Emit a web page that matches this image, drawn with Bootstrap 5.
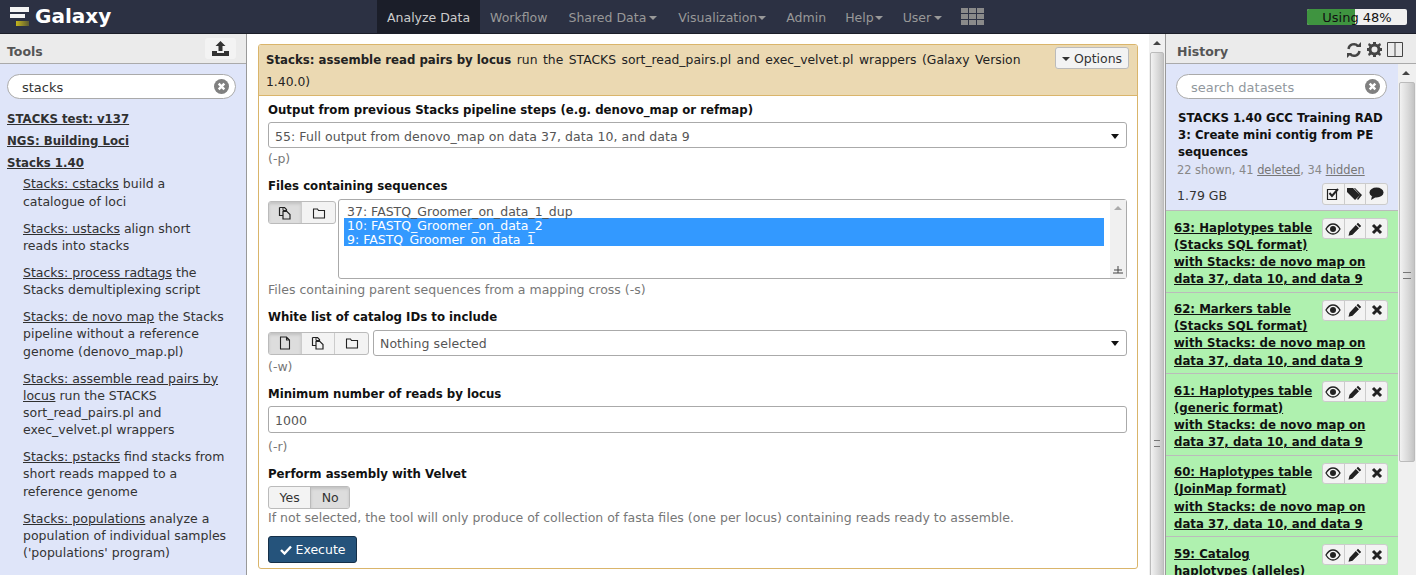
<!DOCTYPE html>
<html lang="en">

<head>
    <meta charset="UTF-8">
    <title>Galaxy</title>
    <link href="https://cdn.jsdelivr.net/npm/bootstrap@5.3.0/dist/css/bootstrap.min.css" rel="stylesheet">
    <style>
        html, body { height: 100%; overflow: hidden; }
        body { font-family: "DejaVu Sans", Verdana, sans-serif; font-size: 12.5px; line-height: 17.14px; color: #333; background: #fff; }
        a { color: #303030; }
        b { font-size: 11.75px; word-spacing: 0; }
        .masthead { height: 34px; background: #2c3143; border-bottom: 1px solid #1b1e29; color: #ccc; }
        .brand { font-size: 20px; font-weight: 700; color: #fff; width: 377px; padding-left: 9px; gap: 6px; }
        .mast-link { padding: 0 10px; line-height: 35px; color: #999; text-decoration: none; font-size: 12.5px; }
        .mast-link.on { background: #1b1e29; color: #ccc; }
        .mast-link.wide { padding-right: 11px; }
        .mast-link.slim { padding-right: 9px; }
        .caret-mini { display: inline-block; border: 4px solid transparent; border-top-color: currentColor; border-bottom: 0; vertical-align: 2px; margin-left: 3px; }
        .mast-link.tight .caret-mini { margin-left: 1px; }
        .grid-ico { margin-left: 9px; }
        .quota { width: 100px; height: 16px; background: #f0f0f0; border-radius: 2px; margin: 0 9px 0 auto; overflow: hidden; position: relative; color: #111; text-align: center; line-height: 17px; font-size: 13px; }
        .quota-fill { position: absolute; left: 0; top: 0; bottom: 0; background: #3f9440; }
        .quota-text { position: relative; }
        .work { height: 541px; overflow: hidden; }
        .side-left { width: 247px; border-right: 1px solid #999; background: #dfe5f9; }
        .side-right { width: 251px; border-left: 1px solid #999; position: relative; background: #dfe5f9; }
        .side-head { height: 30px; background: #ebebeb; border-bottom: 1px solid #aaa; font-weight: 700; color: #555; padding: 0 7px; font-size: 12.5px; }
        .head-title { padding-top: 6px; }
        .head-icons { padding: 2px 6px 0 0; gap: 5px; }
        .up-btn { width: 31px; height: 21px; background: #f3f3f3; border-radius: 3px; margin-right: 3px; }
        .search-pill { margin: 10px 10px 0 7px; height: 25px; border: 1px solid #aaa; border-radius: 13px; background: #fff; padding: 2px 6px 0 14px; font-size: 13px; }
        .search-pill .clear-x { margin-top: -2px; }
        .hist-top .search-pill { margin: 0 11px 0 0; }
        .clear-x { width: 15px; height: 15px; margin-left: auto; }
        .tool-list { padding-top: 12px; }
        .sec-link { display: block; font-weight: 700; font-size: 11.75px; margin: 0 7px 5px; }
        .sec-link.last { margin-bottom: 3px; }
        .tool-row { margin: 0 19px 10px 23px; }
        .mid { position: relative; padding: 10px 11px 0 11px; min-width: 0; }
        .form-box { border: 1px solid #dab56b; border-radius: 3px; height: 525px; overflow: hidden; }
        .form-top { background: #ebd9b2; border-bottom: 1px solid #dab56b; height: 51px; padding: 4px 8px 0 7px; color: #222; }
        .form-top-text { flex: 1; line-height: 22px; font-size: 12.35px; word-spacing: 1.6px; }
        .opt-btn { width: 74px; height: 22px; background: #f3f3f3; border: 1px solid #bbb; border-radius: 3px; color: #333; margin-top: -2px; padding-top: 1px; white-space: nowrap; }
        .form-inner { padding: 6px 10px 0 9px; }
        .fld-label { font-weight: 700; font-size: 11.75px; color: #111; margin-bottom: 4px; }
        .fld-label.snug { margin-bottom: 3px; }
        .fld-note { color: #777; margin-top: 2px; }
        .fld-note.far { margin-top: 5px; }
        .fld-note.flush { margin-top: 0; }
        .fld { margin-bottom: 11px; }
        .fld.short-gap { margin-bottom: 10px; }
        .sel-box { border: 1px solid #aaa; border-radius: 3px; height: 26px; padding: 2px 7px 0 6px; color: #555; background: #fff; letter-spacing: .06px; }
        .sel-box.tall { height: 27px; }
        .sel-caret { margin-left: auto; border: 4px solid transparent; border-top: 5px solid #111; border-bottom: 0; }
        .ico-group { display: inline-flex; border: 1px solid #bbb; border-radius: 3px; background: #f3f3f3; height: 23px; overflow: hidden; margin-top: 2px; }
        .ico-cell { width: 33px; display: flex; align-items: center; justify-content: center; border-right: 1px solid #ccc; }
        .ico-cell:last-child { border-right: 0; }
        .ico-cell.on { background: #ddd; box-shadow: inset 0 2px 3px rgba(0,0,0,.12); }
        .multi-box { flex: 1; height: 80px; border: 1px solid #aaa; border-radius: 3px; margin-left: 2px; padding: 4px 0 0 5px; color: #555; position: relative; }
        .multi-row { padding-left: 3px; margin-right: 22px; height: 14px; line-height: 16px; }
        .multi-row.hit { background: #3399ff; color: #fff; }
        .multi-bar { position: absolute; right: 0; top: 0; bottom: 0; width: 16px; background: #f0f0f0; }
        .multi-up { position: absolute; left: 4px; top: 6px; border: 4px solid transparent; border-bottom-color: #aaa; border-top: 0; }
        .multi-grip { position: absolute; right: 3px; bottom: 3px; }
        .yn { display: inline-flex; border: 1px solid #bbb; border-radius: 3px; height: 23px; overflow: hidden; background: #f3f3f3; color: #333; }
        .yn span { padding: 0 10.5px; line-height: 21px; }
        .yn .on { background: #ddd; border-left: 1px solid #bbb; box-shadow: inset 0 2px 3px rgba(0,0,0,.12); }
        .run-btn { width: 89px; height: 27px; background: #25537b; border: 1px solid #152f48; border-radius: 3px; color: #fff; margin-top: 10px; }
        .vbar { width: 16px; background: #f0f0f0; position: relative; flex: none; overflow: hidden; }
        .vbar-thumb { position: absolute; left: 1px; right: 1px; background: linear-gradient(90deg, #f2f2f2, #d8d8d8 60%, #c4c4c4); border: 1px solid #bbb; border-radius: 2px; }
        .vbar-arrow { position: absolute; left: 4px; top: 7px; border: 4px solid transparent; border-bottom-color: #444; border-top: 0; }
        .grip { position: absolute; left: 3px; right: 3px; top: 50%; height: 7px; border-top: 1px solid #777; border-bottom: 1px solid #777; }
        .hist-scroll { position: absolute; right: 0; top: 30px; bottom: 0; width: 18px; }
        .hist-body { width: 232px; }
        .hist-top { padding: 10px 0 0 10px; height: 147px; border-bottom: 1px solid #bbb; }
        .hist-name { font-weight: 700; font-size: 11.75px; color: #111; margin: 11px 6px 0 2px; }
        .hist-stat { color: #888; font-size: 11.4px; margin: 1px 0 0 1px; }
        .hist-stat a { color: #777; }
        .hist-size { color: #333; padding-left: 1px; }
        .hist-foot { margin-top: 7px; }
        .mini-grp { display: inline-flex; margin-left: auto; margin-right: 10px; border: 1px solid #ccc; border-radius: 3px; background: #f3f3f3; height: 21px; width: 66px; overflow: hidden; }
        .hist-foot .mini-grp { height: 22px; margin-top: -4px; }
        .mini-cell { flex: 1; display: flex; align-items: center; justify-content: center; border-right: 1px solid #ccc; }
        .mini-cell:last-child { border-right: 0; }
        .hist-row { background: #aff1af; border-bottom: 1px solid #bbb; height: 81.6px; padding: 8.5px 10px 0 8px; position: relative; font-size: 11.75px; }
        .hist-row a { font-weight: 700; color: #111; }
        .hist-row .mini-grp { float: right; margin: -1.5px 0 0 6px; }
    </style>
</head>

<body>
    <svg width="0" height="0" class="position-absolute">
        <defs>
            <linearGradient id="gold"><stop offset="0" stop-color="#c4b51c"/><stop offset="1" stop-color="#5b5a33"/></linearGradient>
            <symbol id="i-copy" viewBox="0 0 14 14"><path d="M1.500 1.500h5l2 2v2M1.500 1.500v8h3M5 5.500h4l3 3v4.500H5z" fill="none" stroke="#222" stroke-width="1.200"/><path d="M5 1.500v3h3" fill="none" stroke="#222"/></symbol>
            <symbol id="i-folder" viewBox="0 0 14 14"><path d="M1.500 3h4l1 1.500h6v7.500h-11z" fill="none" stroke="#222" stroke-width="1.100"/></symbol>
            <symbol id="i-file" viewBox="0 0 14 14"><path d="M2.500 1h6l3 3v9h-9zM8.500 1v3h3" fill="none" stroke="#222" stroke-width="1.100"/></symbol>
            <symbol id="i-eye" viewBox="0 0 16 12"><path d="M1 6c2-3.500 4.500-5 7-5s5 1.500 7 5c-2 3.500-4.500 5-7 5S3 9.500 1 6z" fill="none" stroke="#222" stroke-width="1.300"/><circle cx="8" cy="6" r="3" fill="#222"/></symbol>
            <symbol id="i-pen" viewBox="0 0 14 14"><path d="M10 .8l3.200 3.200-1.500 1.500-3.200-3.200zM7.800 3l3.200 3.200-6.500 6.500-4 1 1-4z" fill="#222"/></symbol>
            <symbol id="i-x" viewBox="0 0 12 12"><path d="M2 2l8 8M10 2l-8 8" stroke="#222" stroke-width="3"/></symbol>
            <symbol id="i-clear" viewBox="0 0 16 16"><circle cx="8" cy="8" r="8" fill="#808080"/><path d="M5 5l6 6M11 5l-6 6" stroke="#fff" stroke-width="2.600"/></symbol>
        </defs>
    </svg>

    <nav class="masthead d-flex align-items-stretch">
        <div class="brand d-flex align-items-center">
            <svg width="20" height="21" viewBox="0 0 20 21"><path d="M1 1h19v5H1zM1 8h15v4H1z" fill="#f4f4f4"/><rect x="7" y="15" width="13" height="5" fill="url(#gold)"/></svg>
            <span>Galaxy</span>
        </div>
        <a class="mast-link on" href="#">Analyze Data</a>
        <a class="mast-link wide" href="#">Workflow</a>
        <a class="mast-link wide" href="#">Shared Data<span class="caret-mini"></span></a>
        <a class="mast-link tight" href="#">Visualization<span class="caret-mini"></span></a>
        <a class="mast-link slim" href="#">Admin</a>
        <a class="mast-link tight" href="#">Help<span class="caret-mini"></span></a>
        <a class="mast-link" href="#">User<span class="caret-mini"></span></a>
        <div class="d-flex align-items-center grid-ico">
            <svg width="23" height="17" viewBox="0 0 23 17" fill="#8a8a8a"><path d="M0 0h7v5H0zM8 0h7v5H8zM16 0h7v5h-7zM0 6h7v5H0zM8 6h7v5H8zM16 6h7v5h-7zM0 12h7v5H0zM8 12h7v5H8zM16 12h7v5h-7z"/></svg>
        </div>
        <div class="quota align-self-center"><div class="quota-fill" style="width: 48%"></div><span class="quota-text">Using 48%</span></div>
    </nav>

    <div class="work d-flex">
        <aside class="side-left flex-shrink-0">
            <div class="side-head d-flex align-items-center justify-content-between">
                <span class="head-title">Tools</span>
                <span class="up-btn d-flex align-items-center justify-content-center">
                    <svg width="17" height="15" viewBox="0 0 17 15" fill="#333"><path d="M8.500 0l5 5h-3v5h-4V5h-3zM0 10h5v2h7v-2h5v5H0z"/></svg>
                </span>
            </div>
            <div class="search-pill d-flex align-items-center"><span>stacks</span><svg class="clear-x"><use href="#i-clear"/></svg></div>
            <div class="tool-list">
                <a class="sec-link" href="#">STACKS test: v137</a>
                <a class="sec-link" href="#">NGS: Building Loci</a>
                <a class="sec-link last" href="#">Stacks 1.40</a>
                <div class="tool-row"><a href="#">Stacks: cstacks</a> build a catalogue of loci</div>
                <div class="tool-row"><a href="#">Stacks: ustacks</a> align short reads into stacks</div>
                <div class="tool-row"><a href="#">Stacks: process radtags</a> the Stacks demultiplexing script</div>
                <div class="tool-row"><a href="#">Stacks: de novo map</a> the Stacks pipeline without a reference genome (denovo_map.pl)</div>
                <div class="tool-row"><a href="#">Stacks: assemble read pairs by locus</a> run the STACKS sort_read_pairs.pl and exec_velvet.pl wrappers</div>
                <div class="tool-row"><a href="#">Stacks: pstacks</a> find stacks from short reads mapped to a reference genome</div>
                <div class="tool-row"><a href="#">Stacks: populations</a> analyze a population of individual samples ('populations' program)</div>
            </div>
        </aside>

        <main class="mid flex-grow-1">
            <div class="form-box">
                <div class="form-top d-flex">
                    <div class="form-top-text"><b>Stacks: assemble read pairs by locus</b> run the STACKS sort_read_pairs.pl and exec_velvet.pl wrappers (Galaxy Version<br>1.40.0)</div>
                    <div class="opt-btn d-flex align-items-center justify-content-center gap-1"><span class="caret-mini m-0"></span>Options</div>
                </div>
                <div class="form-inner">
                    <div class="fld">
                        <div class="fld-label snug">Output from previous Stacks pipeline steps (e.g. denovo_map or refmap)</div>
                        <div class="sel-box d-flex align-items-center">55: Full output from denovo_map on data 37, data 10, and data 9<span class="sel-caret"></span></div>
                        <div class="fld-note">(-p)</div>
                    </div>
                    <div class="fld short-gap">
                        <div class="fld-label">Files containing sequences</div>
                        <div class="d-flex align-items-start">
                            <div class="ico-group">
                                <span class="ico-cell on"><svg width="14" height="14"><use href="#i-copy"/></svg></span>
                                <span class="ico-cell"><svg width="14" height="14"><use href="#i-folder"/></svg></span>
                            </div>
                            <div class="multi-box">
                                <div class="multi-row">37: FASTQ_Groomer_on_data_1_dup</div>
                                <div class="multi-row hit">10: FASTQ_Groomer_on_data_2</div>
                                <div class="multi-row hit">9: FASTQ_Groomer_on_data_1</div>
                                <div class="multi-bar"><span class="multi-up"></span>
                                    <svg class="multi-grip" width="10" height="10" viewBox="0 0 10 10"><path d="M5 1v7M1 5h8M0 8h10" stroke="#444" fill="none"/></svg>
                                </div>
                            </div>
                        </div>
                        <div class="fld-note">Files containing parent sequences from a mapping cross (-s)</div>
                    </div>
                    <div class="fld">
                        <div class="fld-label">White list of catalog IDs to include</div>
                        <div class="d-flex align-items-start gap-1">
                            <div class="ico-group">
                                <span class="ico-cell on"><svg width="14" height="14"><use href="#i-file"/></svg></span>
                                <span class="ico-cell"><svg width="14" height="14"><use href="#i-copy"/></svg></span>
                                <span class="ico-cell"><svg width="14" height="14"><use href="#i-folder"/></svg></span>
                            </div>
                            <div class="sel-box flex-grow-1 d-flex align-items-center">Nothing selected<span class="sel-caret"></span></div>
                        </div>
                        <div class="fld-note">(-w)</div>
                    </div>
                    <div class="fld">
                        <div class="fld-label snug">Minimum number of reads by locus</div>
                        <div class="sel-box tall d-flex align-items-center">1000</div>
                        <div class="fld-note far">(-r)</div>
                    </div>
                    <div>
                        <div class="fld-label snug">Perform assembly with Velvet</div>
                        <div class="yn"><span>Yes</span><span class="on">No</span></div>
                        <div class="fld-note flush">If not selected, the tool will only produce of collection of fasta files (one per locus) containing reads ready to assemble.</div>
                    </div>
                    <div class="run-btn d-flex align-items-center justify-content-center gap-1">
                        <svg width="12" height="10" viewBox="0 0 12 10"><path d="M1 5l3.500 3.500L11 1.500" fill="none" stroke="#fff" stroke-width="2.400"/></svg>Execute
                    </div>
                </div>
            </div>
        </main>

        <div class="vbar"><span class="vbar-arrow"></span><div class="vbar-thumb" style="top: 18px; height: 776px"><span class="grip"></span></div></div>

        <aside class="side-right flex-shrink-0">
            <div class="side-head d-flex align-items-center justify-content-between">
                <span class="head-title ps-1">History</span>
                <span class="d-flex align-items-center head-icons">
                    <svg width="16" height="16" viewBox="0 0 16 16"><path d="M2.500 7a5.500 5.500 0 0 1 9.500-3M13.500 9a5.500 5.500 0 0 1-9.500 3" fill="none" stroke="#444" stroke-width="2.400"/><path d="M10 5h5V0zM6 11H1v5z" fill="#444"/></svg>
                    <svg width="15" height="15" viewBox="0 0 15 15"><circle cx="7.500" cy="7.500" r="4.500" fill="none" stroke="#444" stroke-width="3"/><path d="M6 0h3v3H6zM6 12h3v3H6zM0 6h3v3H0zM12 6h3v3h-3zM2 1l3 2-2 2-2-2zM13 1l1 2-2 2-2-2zM2 14l-1-2 2-2 2 2zM13 14l-3-2 2-2 2 2z" fill="#444"/></svg>
                    <svg width="16" height="15" viewBox="0 0 16 15"><path d="M.5.500h15v14H.5zM8 .5v14" fill="none" stroke="#444"/></svg>
                </span>
            </div>
            <div class="hist-body">
                <div class="hist-top">
                    <div class="search-pill d-flex align-items-center text-secondary"><span class="opacity-75">search datasets</span><svg class="clear-x"><use href="#i-clear"/></svg></div>
                    <div class="hist-name">STACKS 1.40 GCC Training RAD 3: Create mini contig from PE sequences</div>
                    <div class="hist-stat">22 shown, 41 <a href="#">deleted</a>, 34 <a href="#">hidden</a></div>
                    <div class="d-flex align-items-center hist-foot">
                        <span class="hist-size">1.79 GB</span>
                        <span class="mini-grp">
                            <span class="mini-cell"><svg width="14" height="14" viewBox="0 0 14 14"><path d="M1.500 2.500h9v10h-9z" fill="none" stroke="#222" stroke-width="1.200"/><path d="M3.500 6l2.500 3 6-7" fill="none" stroke="#222" stroke-width="2"/></svg></span>
                            <span class="mini-cell"><svg width="16" height="14" viewBox="0 0 16 14" fill="#222"><path d="M0 1h6l7 7-5 5-8-8zM8 1l7 7-4 5-1-1 3-4-6-7z"/></svg></span>
                            <span class="mini-cell"><svg width="15" height="13" viewBox="0 0 15 13" fill="#222"><ellipse cx="7.500" cy="5.500" rx="7" ry="5"/><path d="M3 9l-1 4 5-3z"/></svg></span>
                        </span>
                    </div>
                </div>
                <div class="hist-row"><span class="mini-grp"><span class="mini-cell"><svg width="16" height="12"><use href="#i-eye"/></svg></span><span class="mini-cell"><svg width="14" height="14"><use href="#i-pen"/></svg></span><span class="mini-cell"><svg width="12" height="12"><use href="#i-x"/></svg></span></span><a href="#">63: Haplotypes table (Stacks SQL format)<br>with Stacks: de novo map on data 37, data 10, and data 9</a></div>
                <div class="hist-row"><span class="mini-grp"><span class="mini-cell"><svg width="16" height="12"><use href="#i-eye"/></svg></span><span class="mini-cell"><svg width="14" height="14"><use href="#i-pen"/></svg></span><span class="mini-cell"><svg width="12" height="12"><use href="#i-x"/></svg></span></span><a href="#">62: Markers table (Stacks SQL format)<br>with Stacks: de novo map on data 37, data 10, and data 9</a></div>
                <div class="hist-row"><span class="mini-grp"><span class="mini-cell"><svg width="16" height="12"><use href="#i-eye"/></svg></span><span class="mini-cell"><svg width="14" height="14"><use href="#i-pen"/></svg></span><span class="mini-cell"><svg width="12" height="12"><use href="#i-x"/></svg></span></span><a href="#">61: Haplotypes table (generic format)<br>with Stacks: de novo map on data 37, data 10, and data 9</a></div>
                <div class="hist-row"><span class="mini-grp"><span class="mini-cell"><svg width="16" height="12"><use href="#i-eye"/></svg></span><span class="mini-cell"><svg width="14" height="14"><use href="#i-pen"/></svg></span><span class="mini-cell"><svg width="12" height="12"><use href="#i-x"/></svg></span></span><a href="#">60: Haplotypes table (JoinMap format)<br>with Stacks: de novo map on data 37, data 10, and data 9</a></div>
                <div class="hist-row"><span class="mini-grp"><span class="mini-cell"><svg width="16" height="12"><use href="#i-eye"/></svg></span><span class="mini-cell"><svg width="14" height="14"><use href="#i-pen"/></svg></span><span class="mini-cell"><svg width="12" height="12"><use href="#i-x"/></svg></span></span><a href="#">59: Catalog haplotypes (alleles)</a></div>
            </div>
            <div class="vbar hist-scroll"><span class="vbar-arrow"></span><div class="vbar-thumb" style="top: 18px; height: 380px"><span class="grip"></span></div></div>
        </aside>
    </div>

    <script src="https://cdn.jsdelivr.net/npm/bootstrap@5.3.0/dist/js/bootstrap.bundle.min.js"></script>
</body>

</html>
